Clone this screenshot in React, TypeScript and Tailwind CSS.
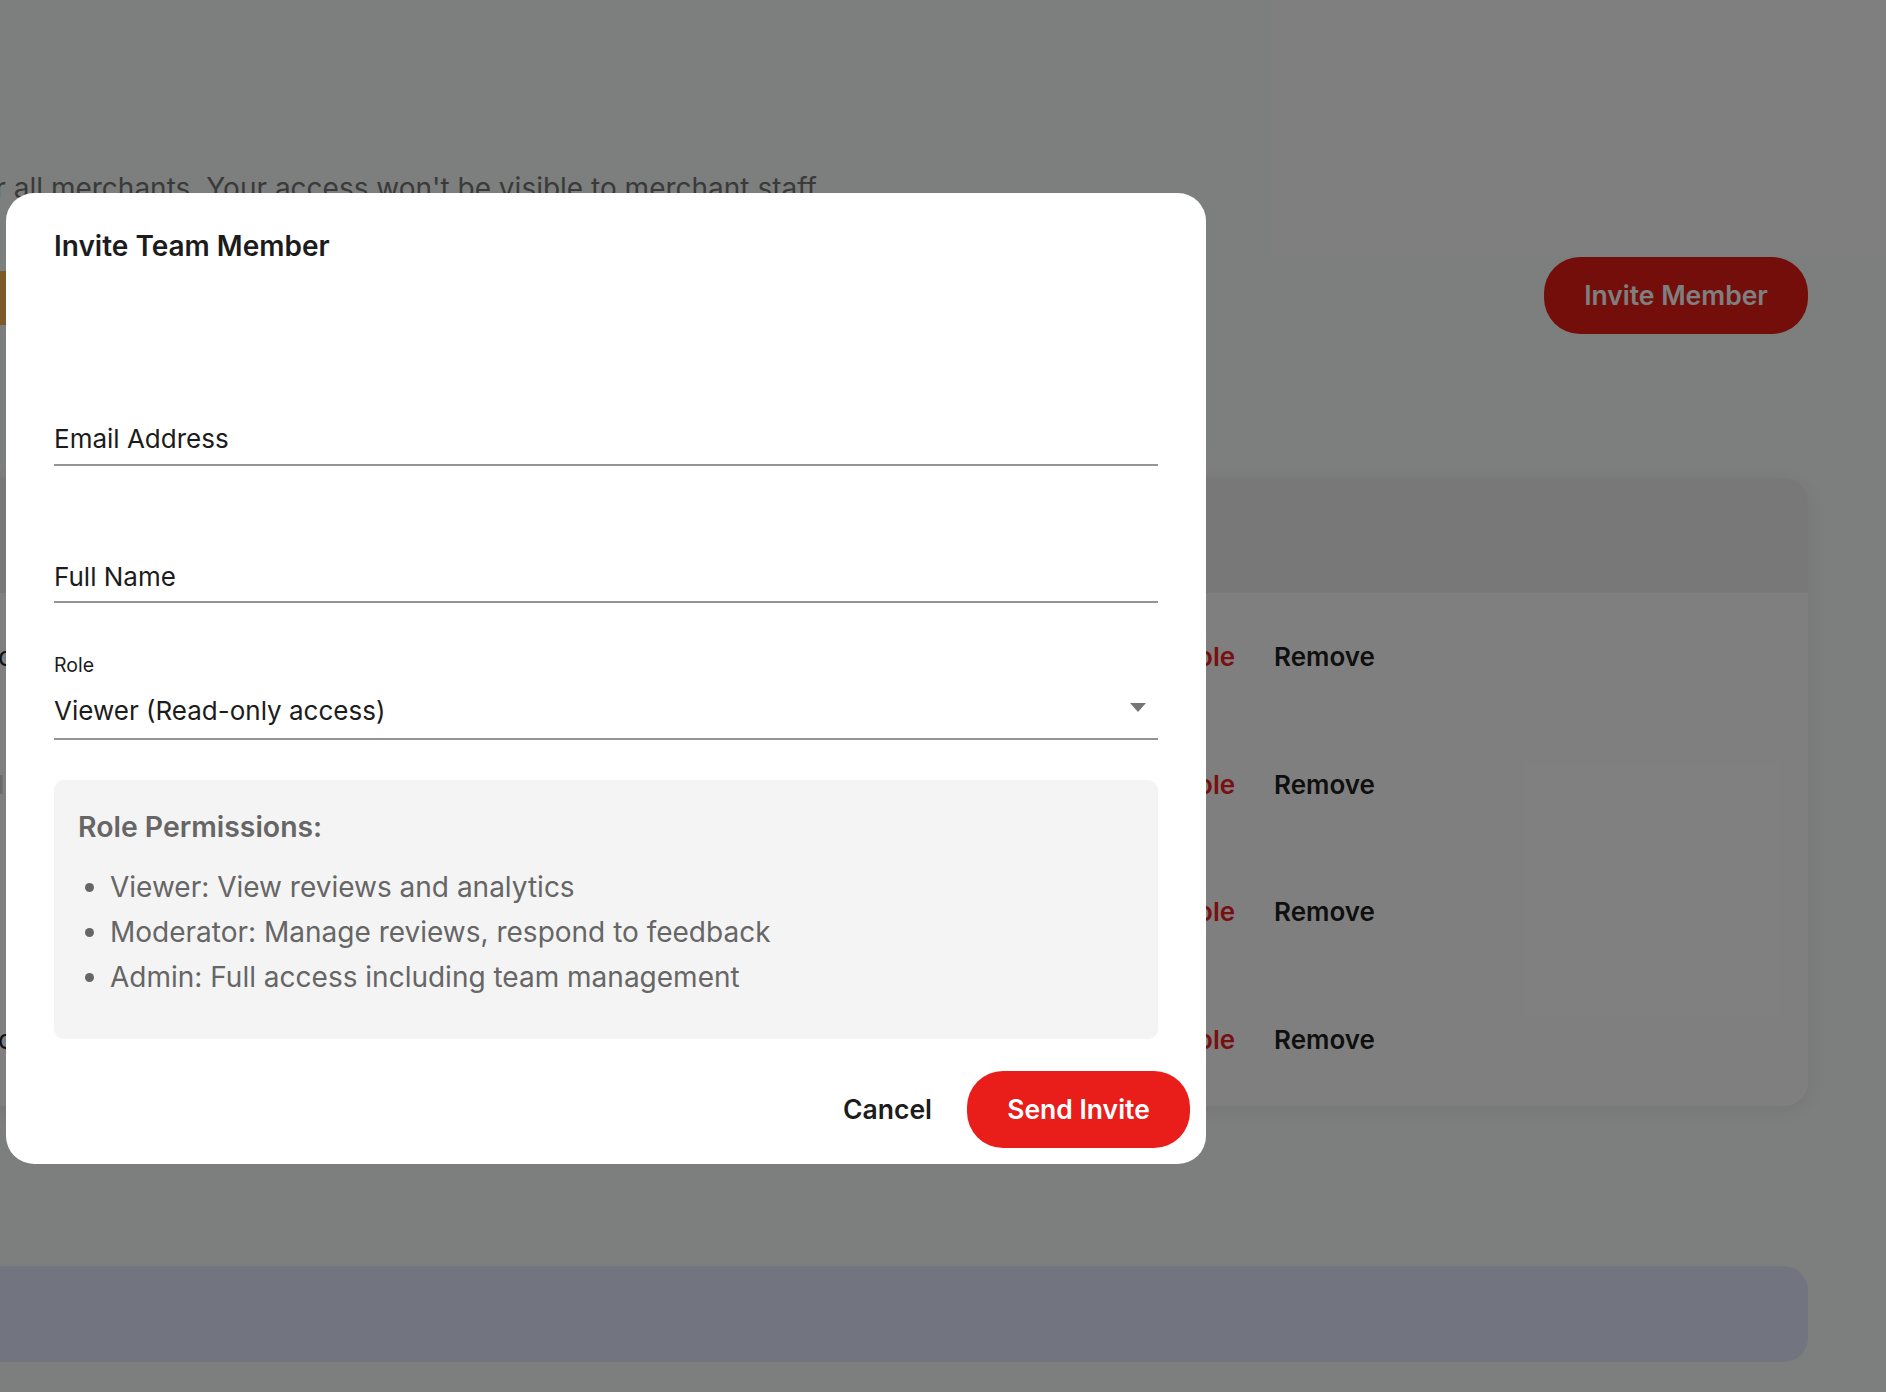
import React from 'react';

const rows = ['c', 'l', '', 'c'];

const Field: React.FC<{ label: string; className: string }> = ({ label, className }) => (
    <div className={`pt-[2px] flex items-center border-b-[2px] border-[#949494] text-[26px] text-[#1c1c1c] ${className}`}>
        {label}
    </div>
);

const App: React.FC = () => {
    return (
        <div className="relative h-[1392px] w-full overflow-hidden bg-[#fbfefc] font-[Inter,sans-serif]">
            {/* page behind the dialog, it runs past the left edge */}
            <div className="flex flex-col ml-[-31px] mr-[78px] pt-[168px]">
                <p className="text-[28px] leading-[40px] text-[#757575] whitespace-nowrap">
                    for all merchants. Your access won't be visible to merchant staff
                </p>
                <div className="flex items-start justify-between mt-[49px]">
                    <div className="w-[200px] h-[54px] mt-[14px] bg-[#fab450]" />
                    <button className="w-[264px] h-[77px] rounded-[36px] bg-[#e71d17] text-white text-[26.5px] font-semibold">
                        Invite Member
                    </button>
                </div>
                <div className="mt-[144px] rounded-[24px] bg-white overflow-hidden shadow-[0_4px_24px_rgba(0,0,0,0.08)]">
                    <div className="h-[115px] bg-[#f0f0f0]" />
                    <div className="pb-[3px]">
                        {rows.map((letter, i) => (
                            <div key={i} className="h-[127.5px] flex items-center justify-between pl-[29px] pr-[433px] text-[26px]">
                                <span className={i === 1 ? 'text-[#d0d0d0]' : 'text-[#1e1e1e]'}>{letter}</span>
                                <div className="flex gap-[39px] font-semibold">
                                    <span className="text-[#f02020]">Change Role</span>
                                    <span className="text-[#1e1e1e]">Remove</span>
                                </div>
                            </div>
                        ))}
                    </div>
                </div>
                <div className="mt-[160px] h-[96px] rounded-[24px] bg-[#e4eaff]" />
            </div>

            {/* modal */}
            <div className="absolute inset-0 bg-black/50">
                <div className="absolute left-[6px] top-[193px] w-[1200px] h-[971px] rounded-[28px] bg-white flex flex-col">
                    <h2 className="pt-[33px] px-[48px] text-[28px] leading-[40px] font-semibold text-[#1c1c1c]">
                        Invite Team Member
                    </h2>
                    <div className="px-[48px] flex flex-col">
                        <Field label="Email Address" className="h-[55px] mt-[145px]" />
                        <Field label="Full Name" className="h-[54px] mt-[83px]" />
                        <label className="mt-[50px] text-[19.5px] leading-[24px] text-[#1c1c1c]">Role</label>
                        <div className="h-[63px] pt-[5px] flex items-center justify-between pr-[12px] border-b-[2px] border-[#949494] text-[26px] text-[#1c1c1c]">
                            <span>Viewer (Read-only access)</span>
                            <svg width="16" height="9" viewBox="0 0 16 9" className="mt-[-6px]">
                                <path d="M0 0h16L8 9z" fill="#767676" />
                            </svg>
                        </div>
                        <div className="mt-[40px] h-[259px] rounded-[10px] bg-[#f4f4f4] pt-[33px] px-[24px] text-[#666666]">
                            <h3 className="text-[28.4px] leading-[28px] font-semibold">Role Permissions:</h3>
                            <ul className="mt-[24px] pl-[32px] list-disc text-[28px] leading-[45px]">
                                <li>Viewer: View reviews and analytics</li>
                                <li>Moderator: Manage reviews, respond to feedback</li>
                                <li>Admin: Full access including team management</li>
                            </ul>
                        </div>
                    </div>
                    <div className="mt-[32px] pr-[16px] flex items-center justify-end gap-[35px] text-[26.5px] font-semibold">
                        <button className="text-[#1c1c1c]">Cancel</button>
                        <button className="w-[223px] h-[77px] rounded-[36px] bg-[#e91d19] text-white">Send Invite</button>
                    </div>
                </div>
            </div>
        </div>
    );
};

export default App;
